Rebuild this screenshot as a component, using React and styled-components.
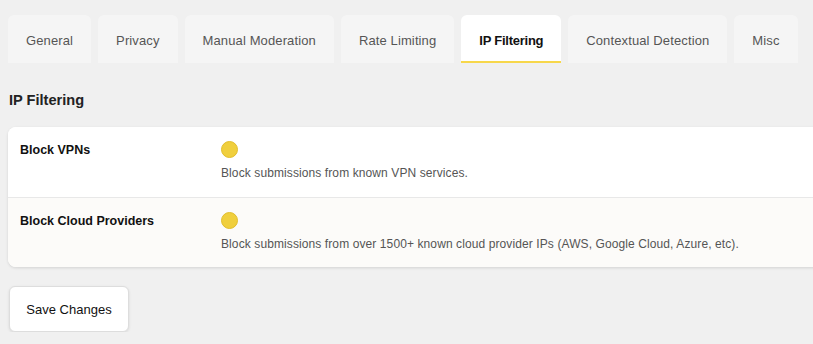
import React from 'react'
import styled, { createGlobalStyle } from 'styled-components'

const GlobalStyle = createGlobalStyle`
  html, body {
    margin: 0;
    padding: 0;
    background: #f0f0f0;
    overflow: hidden;
  }
  body {
    font-family: "Liberation Sans", Arial, sans-serif;
    -webkit-font-smoothing: antialiased;
  }
`

const Page = styled.div`
  padding: 15px 0 0 8px;
`

const TabBar = styled.div`
  display: flex;
  gap: 7px;
`

const Tab = styled.div`
  height: 48px;
  box-sizing: border-box;
  padding: 4px 18px 0;
  display: flex;
  align-items: center;
  border-radius: 6px 6px 0 0;
  font-size: 13px;
  white-space: nowrap;
  background: ${p => (p.$active ? '#ffffff' : '#f5f5f5')};
  color: ${p => (p.$active ? '#111111' : '#555555')};
  font-weight: ${p => (p.$active ? 700 : 400)};
  letter-spacing: ${p => (p.$active ? '-0.25px' : '0.12px')};
  border-bottom: 2px solid ${p => (p.$active ? '#f7d74a' : 'transparent')};
`

const Heading = styled.h2`
  margin: 29px 0 19px 1px;
  font-size: 14.6px;
  font-weight: 700;
  color: #222222;
`

const Card = styled.div`
  margin-right: -24px;
  background: #ffffff;
  border-radius: 8px;
  box-shadow: 0 1px 3px rgba(0, 0, 0, 0.12);
  overflow: hidden;
`

const Row = styled.div`
  display: grid;
  grid-template-columns: 201px 1fr;
  padding: 14px 12px 15px;
  height: 70px;
  box-sizing: border-box;
  background: ${p => (p.$alt ? '#fcfbf9' : '#ffffff')};
  border-top: ${p => (p.$alt ? '1px solid #e8e8e8' : 'none')};
`

const Label = styled.div`
  font-size: 12.5px;
  font-weight: 700;
  color: #111111;
  padding-top: 2px;
`

const Control = styled.div`
  display: flex;
  flex-direction: column;
  align-items: flex-start;
`

const Knob = styled.div`
  width: 15px;
  height: 15px;
  border-radius: 50%;
  background: #f0cf3d;
  border: 1px solid #e2be2c;
`

const Description = styled.div`
  margin-top: 8px;
  font-size: 12px;
  letter-spacing: 0.1px;
  color: #555555;
`

const SaveButton = styled.button`
  margin: 19px 0 0 1px;
  width: 120px;
  height: 46px;
  background: #ffffff;
  border: 1px solid #dddddd;
  border-radius: 6px;
  box-shadow: 0 1px 3px rgba(0, 0, 0, 0.1);
  font-family: inherit;
  font-size: 13px;
  color: #111111;
`

const tabs = [
  'General',
  'Privacy',
  'Manual Moderation',
  'Rate Limiting',
  'IP Filtering',
  'Contextual Detection',
  'Misc',
]

const settings = [
  { label: 'Block VPNs', desc: 'Block submissions from known VPN services.' },
  {
    label: 'Block Cloud Providers',
    desc: 'Block submissions from over 1500+ known cloud provider IPs (AWS, Google Cloud, Azure, etc).',
  },
]

const App = () => {
  return (
    <>
      <GlobalStyle />
      <Page>
        <TabBar>
          {tabs.map(t => (
            <Tab key={t} $active={t === 'IP Filtering'}>
              {t}
            </Tab>
          ))}
        </TabBar>
        <Heading>IP Filtering</Heading>
        <Card>
          {settings.map((s, i) => (
            <Row key={s.label} $alt={i > 0}>
              <Label>{s.label}</Label>
              <Control>
                <Knob />
                <Description>{s.desc}</Description>
              </Control>
            </Row>
          ))}
        </Card>
        <SaveButton>Save Changes</SaveButton>
      </Page>
    </>
  )
}

export default App
